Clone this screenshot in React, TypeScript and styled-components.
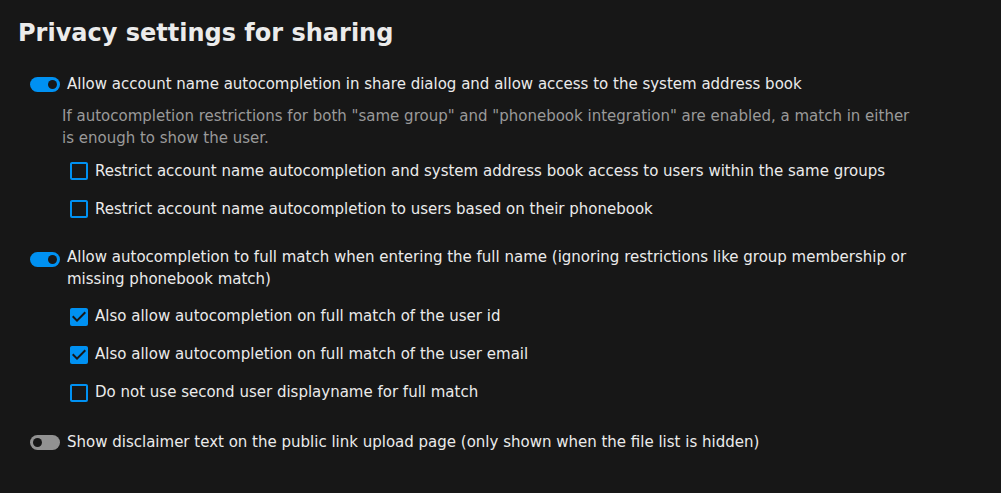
import React from "react";
import styled, { createGlobalStyle } from "styled-components";

const Global = createGlobalStyle`
  html, body { margin: 0; padding: 0; background: #171717; }
  body {
    font-family: "DejaVu Sans", "Noto Sans", sans-serif;
    font-size: 15px;
    line-height: 1.5;
    color: #ebebeb;
    width: 1001px;
    height: 493px;
    overflow: hidden;
  }
`;

const BLUE = "#0091f2";
const BG = "#171717";

const Section = styled.section`
  padding: 18px 18px;
  display: flex;
  flex-direction: column;
  max-width: 912px;
`;

const Heading = styled.h2`
  margin: 0 0 17px;
  font-size: 24px;
  font-weight: bold;
  line-height: 30px;
  color: #ebebeb;
`;

const SwitchRow = styled.label<{ $top?: number; $bottom?: number }>`
  display: flex;
  align-items: flex-start;
  gap: 7px;
  margin-left: 12px;
  padding-top: ${(p) => p.$top ?? 7.75}px;
  padding-bottom: ${(p) => p.$bottom ?? 7.75}px;
  cursor: pointer;
`;

const SwitchIcon = styled.span<{ $offset?: number }>`
  display: flex;
  align-items: center;
  height: 22.5px;
  flex: none;
  margin-top: ${(p) => p.$offset ?? 0}px;
`;

const Label = styled.span`
  color: #ebebeb;
`;

const Description = styled.p`
  margin: 0 0 2.2px 44px;
  padding-top: 1.6px;
  max-width: 855px;
  color: #9a9a9a;
`;

const CheckRow = styled.label`
  display: flex;
  align-items: center;
  gap: 7px;
  height: 38px;
  margin-left: 52px;
  cursor: pointer;
`;

const Toggle = ({ on }: { on: boolean }) => (
  <svg width="30" height="15" viewBox="0 0 30 15">
    <rect x="0" y="0" width="30" height="15" rx="7.5" fill={on ? BLUE : "#929292"} />
    <circle cx={on ? 22.5 : 7.5} cy="7.5" r="4.5" fill={BG} />
  </svg>
);

const Checkbox = ({ checked }: { checked: boolean }) => (
  <svg width="18" height="18" viewBox="3 3 18 18" style={{ flex: "none" }}>
    {checked ? (
      <>
        <path
          d="M19,3H5C3.89,3 3,3.89 3,5V19A2,2 0 0,0 5,21H19A2,2 0 0,0 21,19V5C21,3.89 20.1,3 19,3Z"
          fill={BLUE}
        />
        <path d="M10,17L5,12L6.41,10.58L10,14.17L17.59,6.58L19,8Z" fill={BG} />
      </>
    ) : (
      <path
        d="M19,3H5C3.89,3 3,3.89 3,5V19A2,2 0 0,0 5,21H19A2,2 0 0,0 21,19V5C21,3.89 20.1,3 19,3M19,5V19H5V5H19Z"
        fill={BLUE}
      />
    )}
  </svg>
);

const Check = ({ checked, children }: { checked: boolean; children: React.ReactNode }) => (
  <CheckRow>
    <Checkbox checked={checked} />
    <Label>{children}</Label>
  </CheckRow>
);

export default function App() {
  return (
    <>
      <Global />
      <Section>
        <Heading>Privacy settings for sharing</Heading>

        <SwitchRow>
          <SwitchIcon>
            <Toggle on />
          </SwitchIcon>
          <Label>
            Allow account name autocompletion in share dialog and allow access to the system address book
          </Label>
        </SwitchRow>
        <Description>
          If autocompletion restrictions for both "same group" and "phonebook integration" are enabled, a match in
          either is enough to show the user.
        </Description>
        <Check checked={false}>
          Restrict account name autocompletion and system address book access to users within the same groups
        </Check>
        <Check checked={false}>Restrict account name autocompletion to users based on their phonebook</Check>

        <SwitchRow $top={17.75} $bottom={7.2}>
          <SwitchIcon $offset={2.5}>
            <Toggle on />
          </SwitchIcon>
          <Label>
            Allow autocompletion to full match when entering the full name (ignoring restrictions like group
            membership or missing phonebook match)
          </Label>
        </SwitchRow>
        <Check checked>Also allow autocompletion on full match of the user id</Check>
        <Check checked>Also allow autocompletion on full match of the user email</Check>
        <Check checked={false}>Do not use second user displayname for full match</Check>

        <SwitchRow $top={19.75}>
          <SwitchIcon>
            <Toggle on={false} />
          </SwitchIcon>
          <Label>Show disclaimer text on the public link upload page (only shown when the file list is hidden)</Label>
        </SwitchRow>
      </Section>
    </>
  );
}
